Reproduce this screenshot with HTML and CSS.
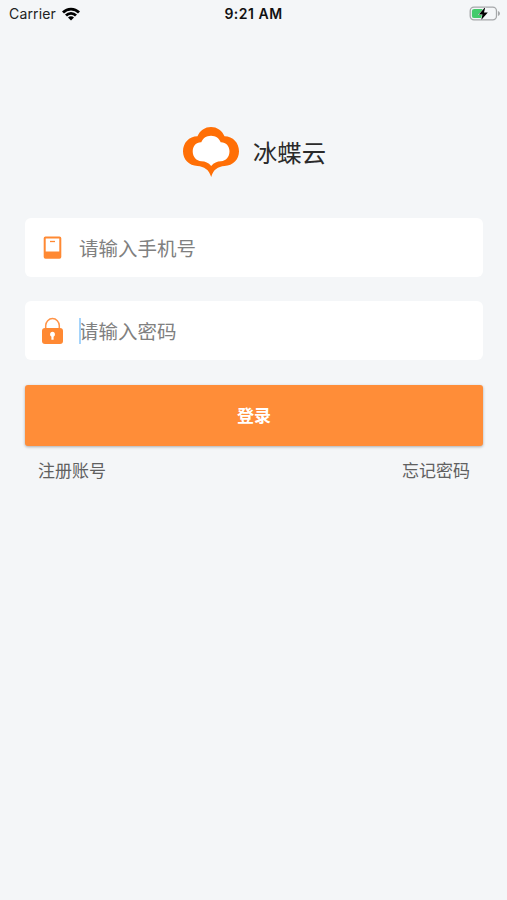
FILE: index.html
```html
<!DOCTYPE html>
<html lang="zh-CN">
<head>
  <meta charset="UTF-8" />
  <meta name="viewport" content="width=device-width, initial-scale=1.0"/>
  <title>冰蝶云</title>
  <link rel="stylesheet" href="styles.css">
</head>
<body>
  <header class="status-bar">
    <div class="carrier">
      <span>Carrier</span>
      <svg class="wifi" viewBox="0 0 18 14">
        <path d="M0 4.5 A12.5 12.5 0 0 1 18 4.5 L16 6.5 A9.7 9.7 0 0 0 2 6.5 Z"/>
        <path d="M3 7.5 A8.3 8.3 0 0 1 15 7.5 L13 9.5 A5.6 5.6 0 0 0 5 9.5 Z"/>
        <path d="M6 10.5 A4.2 4.2 0 0 1 12 10.5 L9 13.5 Z"/>
      </svg>
    </div>
    <div class="time">9:21 AM</div>
    <div class="power">
      <svg class="battery" viewBox="0 0 32 16">
        <rect x="1.2" y="1.2" width="26.3" height="12.6" rx="3.8" fill="none" stroke="#a5a7a9" stroke-width="1.3"/>
        <path d="M29 5 Q31 5.9 31 7.5 Q31 9.1 29 10 Z" fill="#a5a7a9"/>
        <path d="M5.4 2.9 H13.5 V12.1 H5.4 Q2.9 12.1 2.9 9.9 V5.1 Q2.9 2.9 5.4 2.9 Z" fill="#43cb6b"/>
        <path d="M16.3 1.1 L9.8 8.5 H13.5 L12.2 13.9 L18.8 6.5 H15 Z" fill="#000" stroke="#f4f6f8" stroke-width="1" paint-order="stroke"/>
      </svg>
    </div>
  </header>

  <main class="login">
    <div class="brand">
      <svg class="logo" viewBox="0 0 56 50">
        <path d="M14.5 9.2 C17 3.4 22 0 28 0 C34 0 39 3.4 41.5 9.2 C50 9.4 56 15.8 56 24.2 C56 32.6 50 38.4 41.5 39 C35 39.5 30.2 42.5 28.2 50 C26 42.5 21 39.5 14.5 39 C6 38.4 0 32.6 0 24.2 C0 15.8 6 9.4 14.5 9.2 Z" fill="#ff6f06"/>
        <path d="M18.3 15.2 C19.7 11.5 23.2 8.7 28 8.7 C32.8 8.7 36.3 11.5 37.7 15.2 C42.8 15 46.5 19 46.5 24.2 C46.5 29.8 43 33.9 38 34.2 C34 34.4 31 35.5 28.2 38.9 C25.4 35.5 22.4 34.4 18.4 34.2 C13.4 33.9 9.7 29.8 9.7 24.2 C9.7 19 13.2 15 18.3 15.2 Z" fill="#fff"/>
      </svg>
      <h1>冰蝶云</h1>
    </div>

    <form id="loginForm">
      <label class="field">
        <svg class="icon" viewBox="0 0 24 28">
          <path fill-rule="evenodd" d="M4.5 2.5 H18.5 Q20.3 2.5 20.3 4.3 V23 Q20.3 24.8 18.5 24.8 H4.5 Q2.7 24.8 2.7 23 V4.3 Q2.7 2.5 4.5 2.5 Z M4.7 4.4 V17.6 H18.3 V4.4 Z" fill="#ff8933"/>
          <path d="M9 7.5 H14" stroke="#ff8933" stroke-width="1.3"/>
        </svg>
        <input type="tel" placeholder="请输入手机号" />
      </label>
      <label class="field">
        <svg class="icon" viewBox="0 0 24 28">
          <path d="M4.7 12 V8.6 A6.8 7 0 0 1 18.3 8.6 V12" fill="none" stroke="#ff9448" stroke-width="1.5"/>
          <rect x="1" y="11" width="21" height="16" rx="3" fill="#ff8933"/>
          <path d="M11.5 14.8 A2.6 2.6 0 0 1 12.6 19.7 V22.8 H10.4 V19.7 A2.6 2.6 0 0 1 11.5 14.8 Z" fill="#fff"/>
        </svg>
        <span class="caret"></span>
        <input type="password" placeholder="请输入密码" />
      </label>
      <button type="submit">登录</button>
    </form>

    <div class="links">
      <span>注册账号</span>
      <span>忘记密码</span>
    </div>
  </main>
</body>
</html>
```
FILE: styles.css
```css
* {
  margin: 0;
  padding: 0;
  box-sizing: border-box;
}

body {
  min-height: 100vh;
  background-color: #f4f6f8;
  font-family: "Noto Sans CJK SC", sans-serif;
}

.status-bar {
  display: grid;
  grid-template-columns: 1fr auto 1fr;
  align-items: center;
  height: 27px;
  padding: 0 6px 0 9px;
  font-family: Inter, sans-serif;
  font-size: 14px;
  color: #222;
}

.carrier {
  display: flex;
  align-items: center;
  gap: 6px;
  letter-spacing: 0.15px;
}

.wifi {
  width: 18px;
  height: 14px;
  fill: #000;
}

.time {
  margin-right: 3px;
  font-weight: 600;
  letter-spacing: 0.5px;
  color: #111;
}

.power {
  display: flex;
  justify-content: flex-end;
}

.battery {
  width: 32px;
  height: 16px;
}

.login {
  padding: 100px 24px 0 25px;
}

.brand {
  display: flex;
  justify-content: center;
  align-items: center;
  gap: 14px;
  height: 50px;
  padding-left: 1px;
}

.logo {
  width: 56px;
  height: 50px;
}

.brand h1 {
  font-size: 24.3px;
  font-weight: 400;
  line-height: 50px;
  color: #2a2a2a;
}

form {
  display: flex;
  flex-direction: column;
  gap: 24px;
  margin-top: 41px;
}

.field {
  position: relative;
  display: flex;
  align-items: center;
  height: 59px;
  padding: 0 16px;
  background: #fff;
  border-radius: 6px;
}

.icon {
  width: 24px;
  height: 28px;
}

.field input {
  flex: 1;
  height: 40px;
  margin-left: 14px;
  border: none;
  outline: none;
  background: none;
  font-family: inherit;
  font-size: 19.5px;
}

.field input::placeholder {
  color: #808080;
}

/* text cursor of the focused field */
.caret {
  position: absolute;
  left: 54px;
  top: 17px;
  width: 2px;
  height: 26px;
  background: #a5d4fb;
}

button[type="submit"] {
  height: 61px;
  margin-top: 1px;
  border: none;
  border-radius: 3px;
  background-color: #ff8d38;
  box-shadow: 0 1px 3px rgba(0, 0, 0, 0.3);
  color: #fff;
  font-family: inherit;
  font-size: 17px;
  font-weight: 700;
  line-height: 59px;
  padding-bottom: 2px;
}

.links {
  display: flex;
  justify-content: space-between;
  margin-top: 11px;
  padding: 0 13px;
  font-size: 17px;
  line-height: 25px;
  color: #606060;
}
```
